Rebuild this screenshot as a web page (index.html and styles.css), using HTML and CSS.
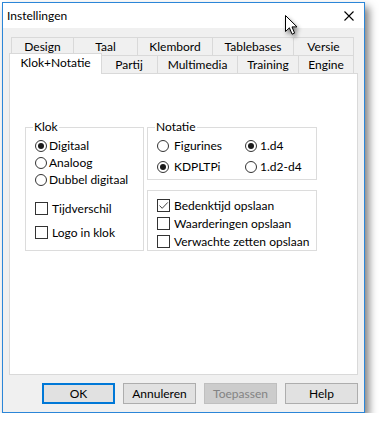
FILE: index.html
```html
<!DOCTYPE html>
<html lang="nl">
<head>
  <meta charset="UTF-8">
  <title>Instellingen</title>
  <link rel="stylesheet" href="styles.css">
</head>
<body>
  <!-- Dialoogvenster -->
  <div class="window">
    <div class="titlebar">
      <span class="title">Instellingen</span>
      <svg class="close" width="10" height="10" viewBox="0 0 10 10">
        <path d="M0.5 0.5L9.5 9.5M9.5 0.5L0.5 9.5" stroke="#000" stroke-width="1.1" fill="none"/>
      </svg>
    </div>

    <div class="client">
      <!-- Tabbladen, twee rijen -->
      <div class="tabs">
        <div class="tabrow">
          <div class="tab t-design">Design</div>
          <div class="tab t-taal">Taal</div>
          <div class="tab t-klembord">Klembord</div>
          <div class="tab t-tablebases">Tablebases</div>
          <div class="tab t-versie last">Versie</div>
        </div>
        <div class="tabrow">
          <div class="tab t-klok selected">Klok+Notatie</div>
          <div class="tab t-partij">Partij</div>
          <div class="tab t-multimedia">Multimedia</div>
          <div class="tab t-training">Training</div>
          <div class="tab t-engine last">Engine</div>
        </div>
      </div>

      <div class="panel">
        <fieldset class="group klok">
          <legend>Klok</legend>
          <div class="opt first"><span class="radio on"></span><span class="lbl">Digitaal</span></div>
          <div class="opt"><span class="radio"></span><span class="lbl">Analoog</span></div>
          <div class="opt"><span class="radio"></span><span class="lbl">Dubbel digitaal</span></div>
          <div class="opt check gap-big"><span class="box"></span><span class="lbl">Tijdverschil</span></div>
          <div class="opt check gap-small"><span class="box"></span><span class="lbl">Logo in klok</span></div>
        </fieldset>

        <div class="rightcol">
          <fieldset class="group notatie">
            <legend>Notatie</legend>
            <div class="grid">
              <div class="opt wide"><span class="radio"></span><span class="lbl">Figurines</span></div>
              <div class="opt mid"><span class="radio on"></span><span class="lbl">1.d4</span></div>
              <div class="opt wide"><span class="radio on"></span><span class="lbl">KDPLTPi</span></div>
              <div class="opt mid"><span class="radio"></span><span class="lbl">1.d2-d4</span></div>
            </div>
          </fieldset>

          <div class="group opslaan">
            <div class="opt check tall">
              <span class="box">
                <svg width="11" height="11" viewBox="0 0 11 11"><path d="M1.5 5.5L4.2 8.3L9.8 2.4" stroke="#444" stroke-width="1" fill="none"/></svg>
              </span>
              <span class="lbl">Bedenktijd opslaan</span>
            </div>
            <div class="opt check tall"><span class="box"></span><span class="lbl">Waarderingen opslaan</span></div>
            <div class="opt check tall"><span class="box"></span><span class="lbl">Verwachte zetten opslaan</span></div>
          </div>
        </div>
      </div>

      <div class="buttons">
        <button class="btn default">OK</button>
        <button class="btn">Annuleren</button>
        <button class="btn disabled">Toepassen</button>
        <button class="btn">Help</button>
      </div>
    </div>
  </div>

  <!-- Muisaanwijzer -->
  <svg class="cursor" width="14" height="21" viewBox="0 0 14 21">
    <path d="M0.5 0.5L0.5 16.5L4.4 12.8L7.1 19.2L9.6 18.1L7 11.9L12 11.9Z" fill="#fff" stroke="#000" stroke-width="1" stroke-linejoin="miter"/>
  </svg>
</body>
</html>
```

FILE: styles.css
```css
/* Algemeen */
body {
  margin: 0;
  padding: 0;
  background-color: #fff;
  font-family: Lato, "Noto Sans", sans-serif;
  font-size: 12px;
  color: #000;
}
.window {
  width: 363px;
  height: 411px;
  margin: 2px 0 0 2px;
  box-sizing: border-box;
  border: 1px solid #2b86d8;
  background-color: #f0f0f0;
  box-shadow: 4px 5px 8px rgba(0, 0, 0, 0.5);
  display: flex;
  flex-direction: column;
}
.titlebar {
  height: 25px;
  background-color: #fff;
  display: flex;
  align-items: center;
  padding: 0 10px 0 4px;
}
.title {
  flex: 1;
  line-height: 16px;
}
.close {
  display: block;
}
.client {
  padding: 9px 6px 7px 6px;
}

/* Tabbladen */
.tabs {
  margin-left: 2px;
  width: 343px;
}
.tabrow {
  display: flex;
  height: 18px;
}
.tab {
  box-sizing: border-box;
  height: 18px;
  line-height: 17px;
  border-top: 1px solid #d9d9d9;
  border-left: 1px solid #d9d9d9;
  text-align: center;
  background-color: #f0f0f0;
}
.tab.last {
  border-right: 1px solid #d9d9d9;
}
.tab.selected {
  position: relative;
  z-index: 1;
  height: 21px;
  margin: -2px -2px -1px -2px;
  border-right: 1px solid #d9d9d9;
  background-color: #fff;
  line-height: 17px;
}
.t-design { width: 62px; }
.t-taal { width: 64px; }
.t-klembord { width: 75px; }
.t-tablebases { width: 81px; }
.t-versie { width: 61px; }
.t-klok { width: 93px; }
.t-partij { width: 57px; }
.t-multimedia { width: 80px; }
.t-training { width: 61px; }
.t-engine { width: 56px; }

/* Paneel */
.panel {
  box-sizing: border-box;
  height: 302px;
  border: 1px solid #d9d9d9;
  background-color: #fff;
  padding: 45px 0 0 15px;
  display: flex;
  gap: 3px;
  align-items: flex-start;
}
.group {
  box-sizing: border-box;
  margin: 0;
  border: 1px solid #dcdcdc;
  min-width: 0;
}
fieldset.group {
  padding: 0 0 0 9px;
}
legend {
  padding: 0 1px;
  margin-left: -2px;
  line-height: 16px;
}
.klok {
  width: 119px;
  height: 132px;
}
.rightcol {
  width: 170px;
  display: flex;
  flex-direction: column;
  gap: 10px;
}
.notatie {
  height: 61px;
  padding-left: 8px;
}
.grid {
  display: grid;
  grid-template-columns: 88px auto;
  row-gap: 4px;
  padding-top: 2px;
}
.opslaan {
  height: 61px;
  padding: 5px 0 0 9px;
}

/* Keuzerondjes en vinkjes */
.opt {
  display: flex;
  align-items: center;
  height: 17px;
  white-space: nowrap;
}
.opt.first {
  margin-top: 2px;
}
.opt.gap-big {
  margin-top: 12px;
}
.opt.gap-small {
  margin-top: 7px;
}
.opt.tall {
  height: 18px;
}
.radio {
  box-sizing: border-box;
  width: 12px;
  height: 12px;
  border: 1px solid #333;
  border-radius: 50%;
  background-color: #fff;
  margin-right: 2px;
  display: flex;
  align-items: center;
  justify-content: center;
}
.radio.on::after {
  content: "";
  width: 6px;
  height: 6px;
  border-radius: 50%;
  background-color: #1a1a1a;
}
.wide .radio {
  margin-right: 5px;
}
.mid .radio {
  margin-right: 3px;
}
.box {
  box-sizing: border-box;
  width: 13px;
  height: 13px;
  border: 1px solid #333;
  background-color: #fff;
  margin-right: 4px;
  display: flex;
  align-items: center;
  justify-content: center;
}
.box svg {
  display: block;
}

/* Knoppen */
.buttons {
  display: flex;
  justify-content: flex-end;
  gap: 8px;
  margin-top: 8px;
}
.btn {
  box-sizing: border-box;
  width: 73px;
  height: 21px;
  padding: 0;
  border: 1px solid #adadad;
  background-color: #e1e1e1;
  font-family: inherit;
  font-size: 12px;
  color: #000;
}
.btn.default {
  border: 2px solid #0078d7;
}
.btn.disabled {
  background-color: #cccccc;
  border-color: #bfbfbf;
  color: #838383;
}

/* Cursor ligt boven het venster */
.cursor {
  position: absolute;
  left: 285px;
  top: 15px;
  filter: drop-shadow(2px 3px 2px rgba(0, 0, 0, 0.45));
}
```
